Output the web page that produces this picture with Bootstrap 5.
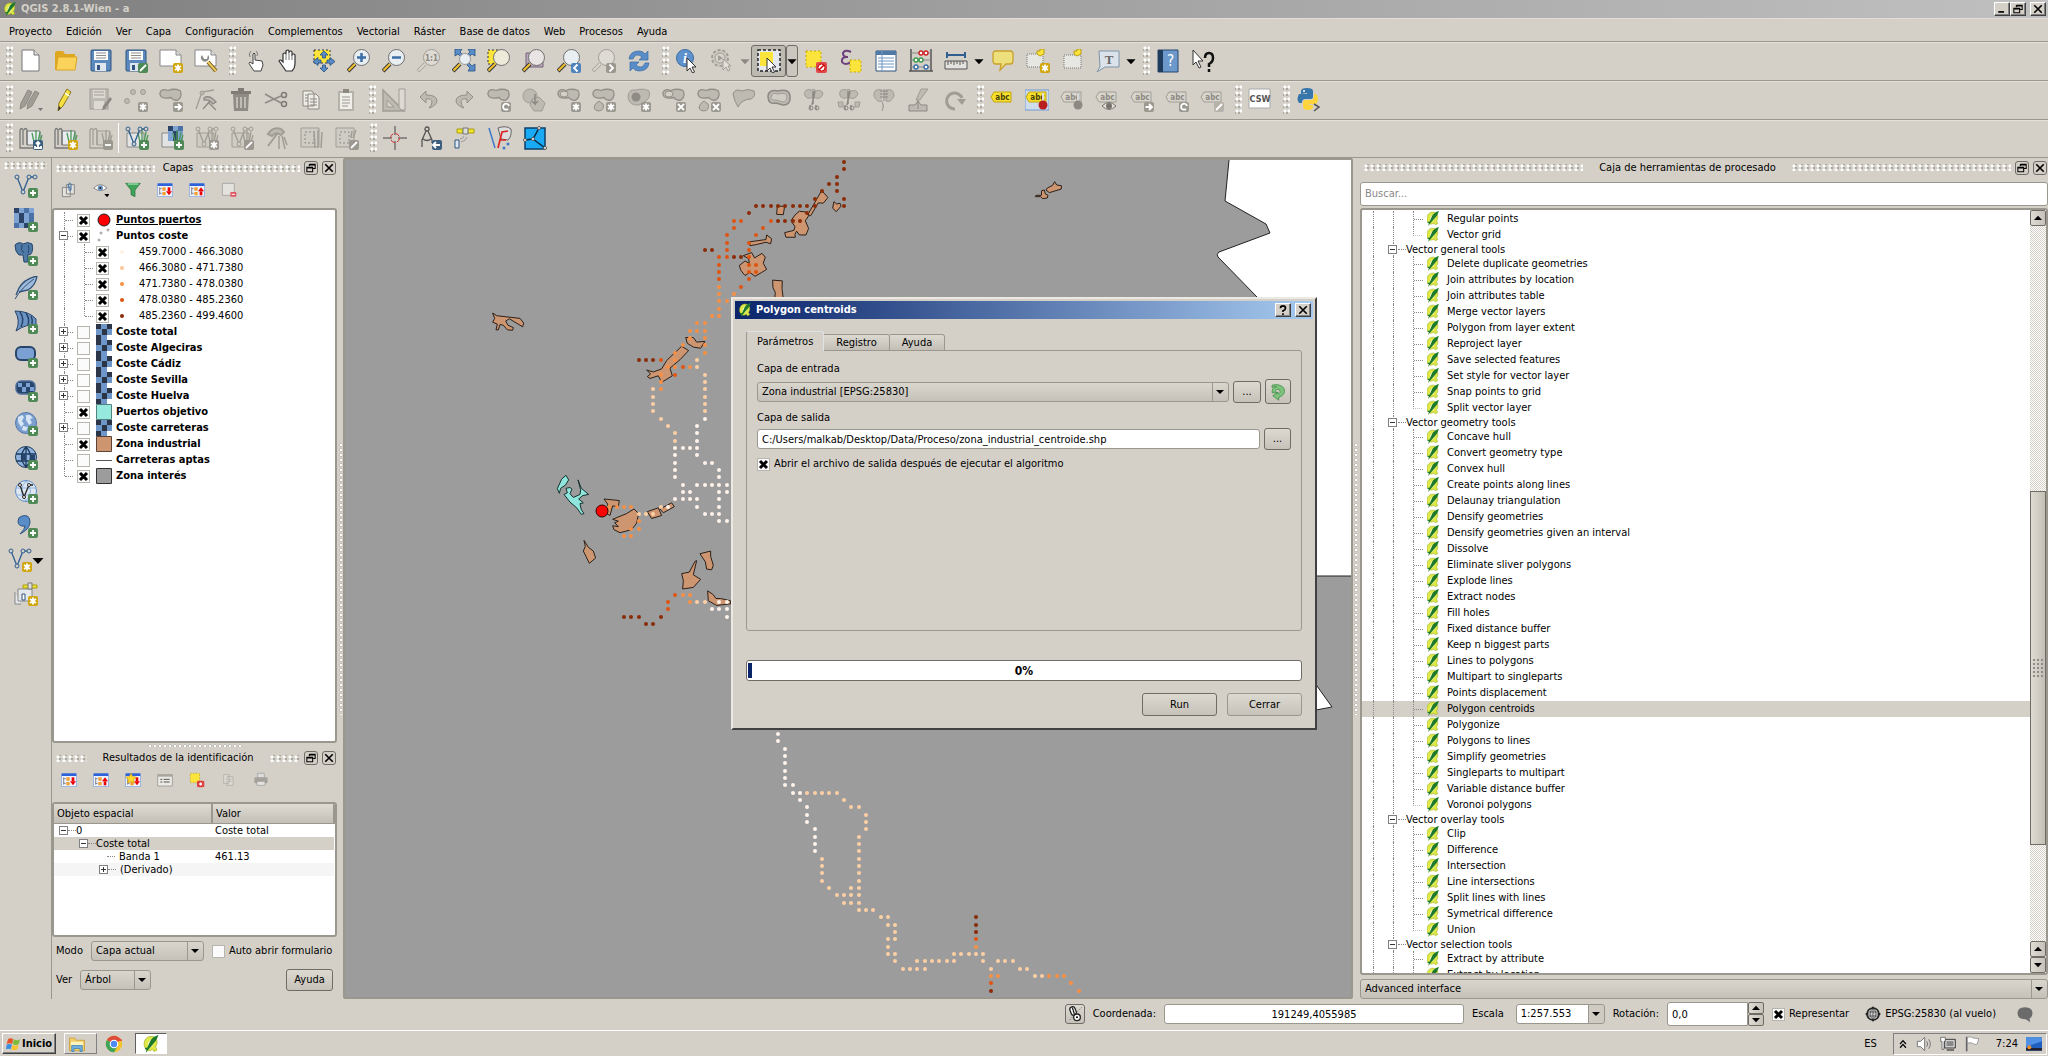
<!DOCTYPE html>
<html lang="es">
<head>
<meta charset="utf-8">
<meta name="viewport" content="width=device-width, initial-scale=1">
<title>QGIS 2.8.1-Wien - a</title>
<link href="https://cdn.jsdelivr.net/npm/bootstrap@5.3.0/dist/css/bootstrap.min.css" rel="stylesheet">
<style>
:root{--face:#d4d0c8;--edge:#9a978f;--dark:#6f6c66;--hi:#fff}
body{font-family:"DejaVu Sans Condensed","DejaVu Sans",Tahoma,sans-serif;font-size:11px;line-height:16px;color:#000;background:var(--face);overflow:hidden}
svg{display:block;flex:none}
button,select,input{font:inherit;color:inherit}
.titlebar{height:18px;background:linear-gradient(90deg,#808080,#c0c0c0);color:var(--face);font-weight:700;padding:0 2px 0 3px}
.winbtn{width:16px;height:14px;padding:0;border:1px solid;border-color:#fff #404040 #404040 #fff;box-shadow:inset -1px -1px 0 #808080;background:var(--face);display:flex;align-items:center;justify-content:center;color:#000}
.menus{height:24px;border-top:1px solid #e2ded3;border-bottom:1px solid var(--edge);padding:3px 0 0 2px}
.menus a{color:#000;text-decoration:none;padding:0 7px}
.toolrow{height:39px;border-top:1px solid #e4e1da;border-bottom:1px solid var(--edge);padding-bottom:2px}
.toolrow:last-child{height:38px}
.tool{width:35px;height:32px;padding:0;border:0;background:none;display:flex;align-items:center;justify-content:center;flex:none;position:relative}
.tool.on{border:1px solid var(--dark);border-radius:3px;background:#bdbab1}
.tool.drop{width:12px}
.tool.on+.drop{border:1px solid var(--dark);border-radius:3px;background:#cbc7be}
.grip{width:7px;height:30px;margin-left:6px;flex:none;background:radial-gradient(circle at 2px 2px,#fff 1px,transparent 2px) 0 0/4px 6px,radial-gradient(circle at 1px 1px,#aaa79f 1px,transparent 1px) 3px 3px/4px 6px}
.hgrip{height:7px;background:radial-gradient(circle at 2px 2px,#fff 1px,transparent 2px) 0 0/6px 4px,radial-gradient(circle at 1px 1px,#aaa79f 1px,transparent 1px) 3px 3px/6px 4px}
.vsep{width:1px;height:30px;background:#fff}
.sidebar{width:52px;border-right:1px solid var(--edge)}
.sidebar .tool{height:34px;width:51px}
.dock{width:285px}
.dockhead{height:20px;padding:0 1px 0 4px}
.dockbtn{width:14px;height:14px;padding:0;border:1px solid var(--dark);border-radius:3px;background:var(--face);display:flex;align-items:center;justify-content:center}
.docktools{height:26px;padding-left:1px}
.docktools .tool{width:32px;height:24px}
.well{background:#fff;border:2px solid var(--edge);border-radius:3px;overflow:hidden}
.splitv{width:5px}
.splitv.wide{width:6px}
.splitv i{width:3px;height:272px;background:radial-gradient(circle at 2px 2px,#fff 1px,#aaa79f 1px,transparent 2px) 0 0/3px 5px}
.splith{height:5px}
.splith i{width:94px;height:3px;background:radial-gradient(circle at 2px 2px,#fff 1px,#aaa79f 1px,transparent 2px) 0 0/5px 3px}
#layers{padding-top:2px}
#algs{padding-top:1px}
.lay{height:16px}
.lay .trunk{width:11px;height:16px;border-right:1px dotted #888}
.lay .trunk.sub{width:20px}
.lay .trunk.half{height:8px;align-self:flex-start}
.stub{width:8px;height:1px;border-top:1px dotted #888;flex:none}
.expd{width:9px;height:9px;border:1px solid #808080;background:#fff;flex:none;position:relative}
.expd::before{content:"";position:absolute;left:1px;right:1px;top:3px;height:1px;background:#333}
.expd.plus::after{content:"";position:absolute;top:1px;bottom:1px;left:3px;width:1px;background:#333}
.lay .expd,.fold .expd{position:absolute}
.lay .expd{left:5px;top:3px}
.form-check-input.tick{width:13px;height:13px;margin:0;border:1px solid #b8b5ae;border-radius:0;background-color:#fbfbfb;background-size:11px 11px;float:none;flex:none;min-height:0}
.form-check-input.tick:checked{background-image:url("data:image/svg+xml,%3Csvg xmlns='http://www.w3.org/2000/svg' viewBox='0 0 11 11'%3E%3Cpath d='M2 2l7 7M9 2l-7 7' stroke='%23000' stroke-width='3'/%3E%3C/svg%3E");background-position:center}
.lay .tick.root{margin:0 6px 0 4px}
.lay .tick.leaf{margin:0 0 0 3px}
.grid-res{width:100%;border-collapse:collapse;line-height:13px}
.grid-res th{height:19px;font-weight:400;padding:0 3px;background:linear-gradient(#dedbd3,#c3bfb6);border-right:2px solid var(--edge);border-bottom:1px solid var(--edge)}
.grid-res td{height:13px;padding:0 0 0 3px}
.grid-res .lv1{padding-left:2px}
.grid-res .lv2{padding-left:22px}
.grid-res .lv3{padding-left:42px}
.grid-res .lv3 .stub:first-child{margin-left:8px}
.grid-res tr.cur td{background:var(--face)}
.grid-res tr.alt td{background:#f5f5f5}
.form-select.combo{height:20px;width:auto;padding:0 20px 0 4px;font-size:11px;line-height:16px;color:#000;border:1px solid var(--edge);border-radius:3px;background:url("data:image/svg+xml,%3Csvg xmlns='http://www.w3.org/2000/svg' width='16' height='18'%3E%3Cpath d='M.5 0v18' stroke='%239a978f'/%3E%3Cpath d='M4 7h8l-4 4z'/%3E%3C/svg%3E") right center/16px 18px no-repeat,linear-gradient(#d9d6ce,#c5c1b8)}
.form-select.combo.paper{background-color:#fff;background-image:url("data:image/svg+xml,%3Csvg xmlns='http://www.w3.org/2000/svg' width='16' height='18'%3E%3Cpath d='M0 0h16v18H0z' fill='%23cfcbc2'/%3E%3Cpath d='M.5 0v18' stroke='%239a978f'/%3E%3Cpath d='M4 7h8l-4 4z'/%3E%3C/svg%3E")}
.form-control.field{height:20px;min-height:0;padding:0 4px;font-size:11px;line-height:16px;color:#000;border:1px solid var(--edge);border-radius:3px;background:#fff}
.form-control.field::placeholder{color:#888}
.pushb{height:22px;padding:0 4px;font-size:11px;line-height:16px;border:1px solid var(--dark);border-radius:3px;background:linear-gradient(#dcd9d1,#c6c2b9);color:#000;display:flex;align-items:center;justify-content:center}
.pushb.wide{width:75px;height:23px}
.pushb.soft{border-color:var(--edge)}
.mapview{border:2px solid var(--edge);border-radius:2px;background:#9c9c9c;min-width:0}
.mapview svg{width:100%;height:100%}
.toolpane{width:690px;padding-left:2px}
.alg{height:16px}
.alg.now{background:var(--face)}
.fold{height:13px;line-height:13px;position:relative}
.t1{width:12px;border-right:1px dotted #888}
.t2{width:20px;border-right:1px dotted #888}
.t3{border-left:1px dotted #888;width:10px;margin-left:19px;background:linear-gradient(90deg,#888 1px,transparent 1px) 2px 8px/2px 1px repeat-x}
.t3.end{border-left:0;padding-left:1px;background:linear-gradient(90deg,#888 1px,transparent 1px) 2px 8px/2px 1px repeat-x,linear-gradient(#888 1px,transparent 1px) 0 0/1px 2px;background-size:2px 1px,1px 2px;background-repeat:repeat-x,repeat-y;clip-path:inset(0 0 7px 0)}
.fold .expd{left:26px;top:2px}
.sbar{width:16px;background:repeating-conic-gradient(#fff 0 25%,#d4d0c8 0 50%) 0 0/2px 2px}
.sbtn{height:16px;padding:0;border:1px solid var(--dark);border-radius:2px;background:linear-gradient(90deg,#dedbd3,#c6c2b9);display:flex;align-items:center;justify-content:center;flex:none}
.thumb{border:1px solid var(--dark);background:linear-gradient(90deg,#dedbd3,#c3bfb6)}
.thumb i{width:10px;height:18px;background:radial-gradient(circle at 1px 1px,#8f8c85 1px,transparent 1px) 0 0/4px 4px}
.status{height:31px;padding:0 14px 1px 0}
.taskbar{height:26px;border-top:1px solid #fff;padding:0 1px 0 2px}
.startb{height:21px;border:1px solid;border-color:#fff #404040 #404040 #fff;box-shadow:inset -1px -1px 0 #808080;background:var(--face);font-weight:700;padding:0 3px}
.startb.flat{border-color:#fff #808080 #808080 #fff;box-shadow:none}
.startb.down{background:#fff;border-color:#606060 #fff #fff #606060;box-shadow:none}
.tray{height:22px;border:1px solid;border-color:#808080 #fff #fff #808080}
.window{position:absolute;left:731px;top:297px;width:586px;height:433px;background:var(--face);border:2px solid;border-color:#ece9e2 #404040 #404040 #ece9e2;padding:2px}
.wintitle{height:18px;background:linear-gradient(90deg,#0a246a,#a6caf0);color:#fff;font-weight:700;padding:0 2px 0 3px}
.winbody{padding:12px 11px 0}
.nav-tabs.tabs{border:0;height:20px;align-items:flex-end;margin-bottom:-1px}
.tabs .nav-link{height:17px;line-height:14px;margin:0;padding:0 12px;border:1px solid var(--edge);border-left:0;border-radius:0 3px 0 0;color:#000;background:linear-gradient(#dcd9d1,#c3bfb6)}
.tabs .nav-link.active{height:20px;line-height:17px;padding:0 10px;border-left:1px solid var(--edge);border-bottom:0;border-radius:3px 3px 0 0;background:var(--face);color:#000}
.pane{height:281px;border:1px solid var(--edge);border-radius:0 3px 3px 3px;padding:10px 10px 0}
.frow{margin-top:2px;margin-bottom:6px}
.gap10{gap:10px}
.progress.bar{height:21px;margin-top:29px;border:1px solid var(--dark);border-radius:3px;background:#fff;position:relative}
.bar .fillbit{width:4px;margin:2px 0 2px 1px;background:#0a246a}
.bar .pct{position:absolute;inset:0;display:flex;align-items:center;justify-content:center;font-weight:700}
</style>
</head>
<body>
<div class="d-flex flex-column vh-100">
  <header>
    <div class="titlebar d-flex align-items-center gap-1">
      <span data-ic="qgis" data-s="14"></span><span>QGIS 2.8.1-Wien - a</span>
      <div class="d-flex ms-auto">
        <button class="winbtn" aria-label="Minimizar" data-ic="wmin" data-s="10"></button>
        <button class="winbtn me-1" aria-label="Restaurar" data-ic="wres" data-s="10"></button>
        <button class="winbtn" aria-label="Cerrar ventana" data-ic="wx" data-s="10"></button>
      </div>
    </div>
    <nav class="menus d-flex align-items-center">
      <a href="#">Proyecto</a><a href="#">Edición</a><a href="#">Ver</a><a href="#">Capa</a><a href="#">Configuración</a><a href="#">Complementos</a><a href="#">Vectorial</a><a href="#">Ráster</a><a href="#">Base de datos</a><a href="#">Web</a><a href="#">Procesos</a><a href="#">Ayuda</a>
    </nav>
    <div class="toolrow d-flex align-items-center" data-bar="| new open save saveas composer composers | touch pan pansel zin zout z11 zfull zsel zlayer zprev znext refresh | info action darrow_g *selrect darrow desel expr table abacus measure darrow tip bookmark bookmarks annot darrow | book whats"></div>
    <div class="toolrow d-flex align-items-center" data-bar="| pencils pencil gsave gdots gmove gnode trash cut copy paste | gset gundo gredo grotate gsimple gring gpart gfill gdelring gdelpart greshape goffset gsplit gsplitp gmerge gknife grot | abc abcpin abc1 abc2 abc3 abc4 abc5 | csw | python"></div>
    <div class="toolrow d-flex align-items-center" data-bar="| gr1 gr2 gr3 ; grv grr grg1 grg2 grg3 grg4 grg5 | cross compass gps topo voro"></div>
  </header>

  <main class="d-flex flex-grow-1" style="min-height:0">
    <aside class="sidebar d-flex flex-column align-items-center">
      <div class="hgrip mt-1 align-self-stretch mx-1"></div>
      <div data-bar="vec ras ele feather mssql ora orar wms wcs wfs comma newv newgps"></div>
    </aside>

    <section class="dock d-flex flex-column">
      <div class="dockhead d-flex align-items-center"><span class="hgrip flex-fill"></span><span class="px-2">Capas</span><span class="hgrip flex-fill me-1"></span>
        <button class="dockbtn me-1" aria-label="Separar" data-ic="wres" data-s="10"></button><button class="dockbtn" aria-label="Cerrar panel" data-ic="wx" data-s="10"></button></div>
      <div class="docktools d-flex" data-bar="clip eye funnel treed treeu rem"></div>
      <div class="well mt-1 flex-grow-1" id="layers"></div>
      <div class="splith d-flex justify-content-center align-items-center"><i></i></div>
      <div class="dockhead d-flex align-items-center"><span class="hgrip flex-fill"></span><span class="px-3">Resultados de la identificación</span><span class="hgrip flex-fill me-1"></span>
        <button class="dockbtn me-1" aria-label="Separar resultados" data-ic="wres" data-s="10"></button><button class="dockbtn" aria-label="Cerrar resultados" data-ic="wx" data-s="10"></button></div>
      <div class="docktools d-flex" data-bar="treed treeu treestar form desels gcopy print"></div>
      <div class="well mt-2" style="height:135px">
        <table class="grid-res">
          <thead><tr><th style="width:158px">Objeto espacial</th><th>Valor</th></tr></thead>
          <tbody>
            <tr><td><div class="d-flex align-items-center lv1"><span class="expd"></span><span class="stub"></span>0</div></td><td>Coste total</td></tr>
            <tr class="cur"><td><div class="d-flex align-items-center lv2"><span class="expd"></span><span class="stub"></span>Coste total</div></td><td></td></tr>
            <tr><td><div class="d-flex align-items-center lv3"><span class="stub me-1"></span>Banda 1</div></td><td>461.13</td></tr>
            <tr class="alt"><td><div class="d-flex align-items-center lv3"><span class="expd plus"></span><span class="stub me-1"></span>(Derivado)</div></td><td></td></tr>
          </tbody>
        </table>
      </div>
      <div class="d-flex align-items-center px-1 mt-1">
        <label for="modo" class="me-2">Modo</label><select id="modo" class="form-select combo" style="width:113px"><option>Capa actual</option></select>
        <input type="checkbox" class="form-check-input tick ms-2 me-1" id="auto"><label for="auto">Auto abrir formulario</label>
      </div>
      <div class="d-flex align-items-center px-1 mt-2 mb-2">
        <label for="ver" class="me-2">Ver</label><select id="ver" class="form-select combo" style="width:71px"><option>Árbol</option></select>
        <button class="btn pushb ms-auto" style="width:47px">Ayuda</button>
      </div>
    </section>

    <div class="splitv wide d-flex align-items-center justify-content-center"><i></i></div>
    <section class="mapview flex-grow-1 d-flex">
      <svg role="img" aria-label="Mapa">
        <g transform="translate(-345,-160)">
          <path d="M1230 150L1225 201L1266 224L1270 233L1219 252Q1216 254 1218 257L1257 297L1300 340V576H1400V150ZM1300 660L1317 686L1332 707L1300 713Z" fill="#fff" stroke="#222"/>
          <g transform="translate(480 150) scale(.3333 .3827)">
            <g fill="#cd9570" stroke="#2b2019">
              <path vector-effect="non-scaling-stroke" d="M1025 106L1044 124L1030 139L1015 138L992 172L984 168L1008 132ZM1062 135L1070 141L1080 139L1083 147L1069 161L1058 152ZM892 147L914 147L910 169L890 168ZM945 170L958 160L978 162L986 172L976 185L986 205L978 222L958 222L950 212L945 220L946 228L918 228L914 216L942 210L945 200L933 185Z"/>
              <path vector-effect="non-scaling-stroke" d="M808 240L858 234L860 222L875 232L872 245L858 241L830 247L810 250ZM778 302L795 290L808 296L806 284L790 276L815 268L824 282L846 270L856 280L850 296L860 312L845 320L825 330L810 320L795 328L783 315ZM878 340L907 342L906 362L910 390H884L886 372L879 360Z"/>
              <path vector-effect="non-scaling-stroke" d="M38 426L50 433L120 440L131 452L128 462L105 450L88 441L77 447L84 458L100 464L98 471L82 470L70 458L60 456L55 470L48 470L52 455L38 450L44 440ZM617 490L640 490L650 502L675 500L662 518L640 515L622 505ZM605 513L626 524L600 548L570 570L577 590L545 607L535 590L510 597L502 592L512 585L500 575L520 580L545 572L560 550Z"/>
              <path vector-effect="non-scaling-stroke" d="M372 912L418 916L415 932L398 930L390 955L380 950L383 925ZM398 965L440 950L462 938L476 950L470 975L455 992L420 1000L402 992L398 982L415 984L404 974L415 970ZM502 945L535 935L545 955L515 963ZM540 938L575 922L583 932L550 948ZM312 1020L325 1038L340 1048L347 1066L328 1080L318 1062L310 1048L316 1036ZM660 1055L692 1048L692 1062L700 1085L695 1097L680 1095L676 1076ZM605 1107L628 1103L645 1075L650 1073L640 1110L662 1122L640 1143L608 1147L610 1125ZM683 1152L700 1162L708 1172L722 1172L752 1178L752 1186L710 1190L685 1178Z"/>
            </g>
            <path vector-effect="non-scaling-stroke" fill="#8ee6dc" stroke="#16302d" d="M232 885L245 860L258 850L266 862L256 876L242 884L238 897ZM252 900L262 896L258 884L270 882L276 886L270 898L280 908L300 900L302 888L294 862L304 884L326 900L308 903L296 912L310 922L300 924L304 940L312 950L304 952L290 935L270 920Z"/>
          </g>
          <g transform="translate(1020 160) scale(.3333)"><path vector-effect="non-scaling-stroke" fill="#cd9570" stroke="#2b2019" d="M82 84L98 76L104 65L110 75L124 77L124 87L88 98L78 90ZM65 92L73 90L76 102L84 106L82 114L68 116L62 110L46 110L48 106L64 106Z"/></g>
          <g id="dots"></g>
          <circle cx="602" cy="511" r="6" fill="#f00" stroke="#300"/>
        </g>
      </svg>
    </section>
    <div class="splitv d-flex align-items-center justify-content-center"><i></i></div>

    <section class="toolpane d-flex flex-column">
      <div class="dockhead d-flex align-items-center"><span class="hgrip flex-fill"></span><span class="px-3">Caja de herramientas de procesado</span><span class="hgrip flex-fill me-1"></span>
        <button class="dockbtn me-1" aria-label="Separar caja" data-ic="wres" data-s="10"></button><button class="dockbtn" aria-label="Cerrar caja" data-ic="wx" data-s="10"></button></div>
      <input class="form-control field mt-1 mb-1" style="height:24px" placeholder="Buscar..." aria-label="Buscar">
      <div class="well d-flex flex-grow-1" style="min-height:0;margin-top:-2px">
        <div id="algs" class="flex-grow-1 overflow-hidden"></div>
        <div class="sbar d-flex flex-column">
          <button class="sbtn" aria-label="Subir" data-ic="up" data-s="8"></button>
          <div style="flex:266"></div>
          <div class="thumb d-flex align-items-center justify-content-center" style="flex:353"><i></i></div>
          <div style="flex:97"></div>
          <button class="sbtn" aria-label="Subir línea" data-ic="up" data-s="8"></button>
          <button class="sbtn" aria-label="Bajar línea" data-ic="down" data-s="8"></button>
        </div>
      </div>
      <select class="form-select combo mt-1 w-100" aria-label="Interfaz"><option>Advanced interface</option></select>
    </section>
  </main>

  <footer>
    <div class="status d-flex align-items-center justify-content-end">
      <button class="btn pushb p-0 me-2" style="width:20px;height:20px" aria-label="Extensión" data-ic="mouse" data-s="16"></button>
      <label for="coord" class="me-2">Coordenada:</label><input id="coord" class="form-control field text-center me-2" style="width:300px" value="191249,4055985">
      <label for="esc" class="me-2 pe-1">Escala</label><select id="esc" class="form-select combo paper me-2" style="width:89px"><option>1:257.553</option></select>
      <label for="rot" class="me-2">Rotación:</label>
      <div class="d-flex me-2"><input id="rot" class="form-control field rounded-end-0" style="width:81px;height:24px" value="0,0">
        <div class="d-flex flex-column"><button class="sbtn" style="width:16px;height:12px" aria-label="Más" data-ic="up" data-s="8"></button><button class="sbtn" style="width:16px;height:12px" aria-label="Menos" data-ic="down" data-s="8"></button></div></div>
      <input type="checkbox" class="form-check-input tick me-1" id="rep" checked><label for="rep" class="me-3">Representar</label>
      <span class="me-1" data-ic="crs" data-s="16"></span><span class="me-3 pe-1">EPSG:25830 (al vuelo)</span>
      <span data-ic="bubble" data-s="18"></span>
    </div>
    <div class="taskbar d-flex align-items-center">
      <button class="startb d-flex align-items-center" style="width:54px"><span data-ic="win" data-s="16"></span>Inicio</button>
      <button class="startb flat ms-2 d-flex align-items-center" style="width:33px" aria-label="Explorador" data-ic="folder" data-s="18"></button>
      <button class="border-0 bg-transparent p-0 ms-2 me-2 d-flex" aria-label="Chrome" data-ic="chrome" data-s="18"></button>
      <button class="startb down ms-1 d-flex align-items-center justify-content-center" style="width:32px" aria-label="QGIS" data-ic="qgis" data-s="18"></button>
      <span class="ms-auto me-3">ES</span>
      <div class="tray d-flex align-items-center gap-2 ps-1 pe-1">
        <span data-ic="chev" data-s="10"></span><span data-ic="spk" data-s="16"></span><span data-ic="net" data-s="16"></span><span data-ic="flag" data-s="16"></span><span class="ms-2">7:24</span><span data-ic="desk" data-s="16"></span>
      </div>
    </div>
  </footer>
</div>

<div class="window" role="dialog" aria-label="Polygon centroids">
  <div class="wintitle d-flex align-items-center gap-1"><span data-ic="qgis" data-s="14"></span><span>Polygon centroids</span>
    <button class="winbtn ms-auto" aria-label="Ayuda de la ventana" data-ic="wq" data-s="10"></button><button class="winbtn" aria-label="Cerrar diálogo" data-ic="wx" data-s="10"></button></div>
  <div class="winbody">
    <div class="nav nav-tabs tabs"><button class="nav-link active">Parámetros</button><button class="nav-link">Registro</button><button class="nav-link">Ayuda</button></div>
    <div class="pane">
      <label for="ent" class="d-block">Capa de entrada</label>
      <div class="d-flex align-items-center frow gap-1">
        <select id="ent" class="form-select combo flex-grow-1"><option>Zona industrial [EPSG:25830]</option></select>
        <button class="btn pushb" style="width:28px" aria-label="Elegir entrada">...</button>
        <button class="btn pushb p-0" style="width:26px;height:25px" aria-label="Iterar" data-ic="iter" data-s="18"></button>
      </div>
      <label for="sal" class="d-block">Capa de salida</label>
      <div class="d-flex align-items-center frow gap-1">
        <input id="sal" class="form-control field flex-grow-1" value="C:/Users/malkab/Desktop/Data/Proceso/zona_industrial_centroide.shp">
        <button class="btn pushb" style="width:28px" aria-label="Elegir salida">...</button>
      </div>
      <div class="d-flex align-items-center gap-1"><input type="checkbox" class="form-check-input tick" id="abr" checked><label for="abr">Abrir el archivo de salida después de ejecutar el algoritmo</label></div>
    </div>
    <div class="progress bar" role="progressbar" aria-label="Progreso"><span class="fillbit"></span><span class="pct">0%</span></div>
    <div class="d-flex justify-content-end gap10 mt-2 pt-1">
      <button class="btn pushb wide">Run</button><button class="btn pushb wide soft">Cerrar</button>
    </div>
  </div>
</div>

<script>
/* Icon drawings on a 24 x 24 grid */
const G='#a09d95', L='#bdbab2';
const lens=(c='#e9eef2',s='#6f6f6f',h='#f0c030')=>`<path d="M8 15L1 22" stroke="#333" stroke-width="4"/><path d="M8 15L1.500 21.500" stroke="${h}" stroke-width="2.200"/><circle cx="14.500" cy="8.500" r="8" fill="${c}" stroke="${s}"/>`;
const glens=`<path d="M8 15L1 22" stroke="${G}" stroke-width="3.500"/><path d="M8 15L1.500 21.500" stroke="#dcd9d1" stroke-width="2"/><circle cx="14.500" cy="8.500" r="8" fill="#dedbd4" stroke="${G}"/>`;
const bdg=(f,d)=>`<rect x="14" y="14" width="10" height="10" rx="2" fill="${f}"/><path d="${d}" stroke="#fff" stroke-width="1.800" fill="none"/>`;
const PL='M19 16v6M16 19h6', ST='M19 15.500v7M16 17l6 4M16 21l6-4', AR='M15.500 19h6M19 16l3 3-3 3', XX='M16 16l6 6M22 16l-6 6', MI='M16 19h6', PE='M16 22l6-6', RO='M21 21a3 3 0 1 1 1-3';
const plus=bdg('#4f8a56',PL), star=bdg('#d0a60c',ST), gb=d=>bdg('#9b9890',d);
const bean=`<path d="M1 5Q2 0 9 2.500Q15 0 21 2.500Q24 8 19 12Q14 13 12 9.500Q6 11 2.500 9Q.5 7 1 5Z" fill="${L}" stroke="#928f87" stroke-width="1.300"/>`;
const sheet=(s,f)=>`<path d="M8 5h13v14H8z" fill="${f}" stroke="${s}"/><path d="M1 4v18h19v-3M1 4q1.500-3 3 0v15M5 4q1.500-3 3 0v15" fill="none" stroke="${s}" stroke-width="1.300"/>`;
const grass=c=>`<path d="M15 16l-2-9M17 16V4M19 16l2-10M21 16l2-7" stroke="${c}" stroke-width="1.300"/>`;
const vee=(c)=>`<path d="M3 3L9 18L15 3H21" fill="none" stroke="${c}" stroke-width="1.300"/><g fill="#d4d0c8" stroke="${c}"><circle cx="3" cy="3" r="2"/><circle cx="9" cy="18" r="2"/><circle cx="15" cy="3" r="2"/><circle cx="21" cy="3" r="2"/></g>`;
const tag=(f,s,t)=>`<path d="M1 9L4 4H21V14H4Z" fill="${f}" stroke="${s}"/><text x="12.500" y="12" font-size="8" font-weight="700" text-anchor="middle" fill="${t}" font-family="DejaVu Sans Condensed,sans-serif">abc</text>`;
const flo=`<rect x="2" y="1" width="20" height="21" rx="1" fill="#5b88bd" stroke="#2f5480"/><path d="M5 2h14v9H5z" fill="#fff"/><path d="M7 4h10M7 6.500h10M7 9h10" stroke="#8a8a8a"/><path d="M6 14h11v8H6z" fill="#dfe6ee"/><path d="M8 16h3v5H8z" fill="#2f5480"/>`;
const page=`<path d="M3 1H15L20 6V22H3Z" fill="#fff" stroke="#777"/><path d="M15 1v5h5" fill="#ddd" stroke="#777"/>`;
const cur=(x,y)=>`<path transform="translate(${x} ${y})" d="M0 0v13l3-3 2.500 5 2-1-2.500-5h4z" fill="#fff" stroke="#333"/>`;
const flowers=`<path d="M10 2Q1 0 3 8Q6 12 11 9Q18 13 21 6Q20 1 14 3Q12 0 10 2Z" fill="${L}" stroke="${G}"/><path d="M11 3v13M13 3l-3 14M8 17v5M14 17v5" stroke="#8c8982" stroke-width="1.500"/><circle cx="9" cy="20" r="2" fill="none" stroke="#8c8982"/><circle cx="15" cy="20" r="2" fill="none" stroke="#8c8982"/>`;
const checks=(x,y,w,n)=>{let s='';for(let i=0;i<n;i++)for(let j=0;j<n;j++)s+=`<rect x="${x+i*w}" y="${y+j*w}" width="${w}" height="${w}" fill="${['#2b4468','#7fa3d2','#4a72a6','#7fa3d2'][(i+j*3+(j>1?1:0))%4]}"/>`;return s};
const globe=(f,s)=>`<circle cx="12" cy="11" r="10.500" fill="${f}" stroke="${s}"/>`;
const panel=(a)=>`<rect x="1" y="3" width="22" height="19" fill="#eef3ff" stroke="#7fa2e0"/><path d="M1 2h22v4H1z" fill="#2e62d9"/><path d="M4 8v11M4 10h3M4 17h3" stroke="#555"/><path d="M8 8h5v5H8zM8 15h5v5H8z" fill="#f0a030"/>${a}`;
const dn='<path d="M18 8v6" stroke="#e00" stroke-width="4"/><path d="M13.500 14h9L18 20z" fill="#e00"/>', upA='<path d="M18 20v-6" stroke="#e00" stroke-width="4"/><path d="M13.500 14h9L18 8z" fill="#e00"/>';
const I={
qgis:'<path d="M13 2C6 1 2 8 3 14Q4 20 9 21Q12 21 14 19L16 22L20 20L18 16C22 10 20 2 13 2Z" fill="#dfe94a" stroke="#a3b020"/><path d="M13 6Q8 8 8 14Q8 17 10 17Q15 15 15 9Z" fill="#fff"/><path d="M22 0Q14 2 11 8L7 17L4 17V19H6L5 24L8 20L14 13L19 7Z" fill="#1c7a2a"/>',
wmin:'<path d="M3 19h14" stroke="#000" stroke-width="4"/>',
wres:'<path d="M8 3h14v10h-5M8 3v5M7 5h16" fill="none" stroke="#000" stroke-width="2.500"/><path d="M2 10h14v11H2zM2 12h14" fill="none" stroke="#000" stroke-width="2.500"/>',
wx:'<path d="M3 3l18 18M21 3L3 21" stroke="#000" stroke-width="4"/>',
wq:'<path d="M6 8Q6 2 12 2T18 8Q18 12 12 14V17M12 20v4" fill="none" stroke="#000" stroke-width="4"/>',
up:'<path d="M0 18L12 5L24 18Z"/>',down:'<path d="M0 6L12 19L24 6Z"/>',
darrow:'<path d="M1 8h22L12 20z"/>',darrow_g:'<path d="M1 8h22L12 20z" fill="#8c8982"/>',
new:page,open:'<path d="M1 4Q1 2 3 2h6l2 3h10v16H1z" fill="#e0a820"/><path d="M4 8h19l-2 13H2z" fill="#fbd35a" stroke="#d9a420"/>',
save:flo,saveas:flo+bdg('#4f8a56',PE),
composer:'<path d="M1 1H17L22 6V17H1Z" fill="#fff" stroke="#888"/><path d="M17 1v5h5" fill="#ddd" stroke="#888"/>'+star,
composers:'<path d="M1 1H17L22 6V17H1Z" fill="#fff" stroke="#888"/><path d="M17 1v5h5" fill="#ddd" stroke="#888"/><path d="M8 6a4 4 0 1 0 6 0l-1 4h-3z" fill="#8a8a8a"/><path d="M14 13L22 22" stroke="#7a5c10" stroke-width="4"/><path d="M14 13L22 22" stroke="#e8c860" stroke-width="2"/>',
touch:'<path d="M11 5v10l-3-2q-2 1 0 3l4 6h7l2-6-1-4-7-1V5q-1-2-2 0z" fill="#fff" stroke="#444"/><path d="M8 8a5 5 0 0 1 1-6M15 7a4 4 0 0 0-1-5" fill="none" stroke="#777"/>',
pan:'<path d="M6 13V5q2-2 3 0V2q2-2 3 0v1q2-2 3 0v3q2-2 3 0v9q0 4-3 7H9L2 12q1-2 3 0z" fill="#fff" stroke="#333" stroke-width="1.200"/><path d="M9 5v6M12 3v8M15 5v6" stroke="#777"/>',
pansel:'<path d="M2 1h16v13H2z" fill="#fbe43b" stroke="#333" stroke-dasharray="2"/><g fill="#5a8cc8" stroke="#27507f" stroke-width=".8"><path d="M12 2l4 4h-2.500v3h-3V6H8zM12 23l4-4h-2.500v-3h-3v3H8zM1 12.500l5-4v2.500h3v3H6v2.500zM23 12.500l-5-4v2.500h-3v3h3v2.500z"/></g>',
zin:lens()+'<path d="M14.500 4v9M10 8.500h9" stroke="#3a6ea5" stroke-width="2.500"/>',
zout:lens()+'<path d="M10 8.500h9" stroke="#3a6ea5" stroke-width="2.500"/>',
z11:glens+'<text x="14.500" y="11.500" font-size="8" text-anchor="middle" fill="#8a8780" font-weight="700">1:1</text>',
zfull:'<path d="M3 0h7L8 3l3 3-2 2-3-3-3 2zM23 0v7l-3-2-3 3-2-2 3-3-2-3zM23 22h-7l2-3-3-3 2-2 3 3 3-2z" fill="#5a8cc8" stroke="#27507f" stroke-width=".8"/><path d="M8 15L1 22" stroke="#333" stroke-width="4"/><path d="M8 15L1.500 21.500" stroke="#f0c030" stroke-width="2.200"/><circle cx="13" cy="10" r="5.500" fill="#e9eef2" stroke="#999"/>',
zsel:'<path d="M1 1h14v14H1z" fill="#fbe43b" stroke="#333" stroke-dasharray="2"/>'+lens('#eeeada'),
zlayer:'<path d="M4 4h17v14H4z" fill="#b9a8b9" stroke="#76627a"/>'+lens('#e8e4e4'),
zprev:lens()+bdg('#4f83bd','M20.500 15.500L17 19l3.500 3.500'),znext:glens+gb('M17.500 15.500L21 19l-3.500 3.500'),
refresh:'<path d="M2 10Q3 2 12 2q4 0 6 3l3-3v9h-9l3-3q-6-5-9 2zM22 14q-1 8-10 8-4 0-6-3l-3 3v-9h9l-3 3q6 5 9-2z" fill="#5a8cc8" stroke="#3a6ea5" stroke-width=".7"/>',
info:'<circle cx="10" cy="9" r="8.500" fill="#5f92cc" stroke="#3a6ea5"/><text x="10" y="14" font-size="14" font-style="italic" font-weight="700" fill="#fff" text-anchor="middle" font-family="Liberation Serif,serif">i</text>'+cur(12,9),
action:`<circle cx="10" cy="9" r="8" fill="#cbc8c0" stroke="${G}" stroke-width="2" stroke-dasharray="3 2"/><circle cx="10" cy="9" r="5" fill="#d8d5cd" stroke="${G}"/><path d="M8 6v6l5-3z" fill="${G}"/><path d="M13 10v11l3-3 2 4 2-1-2-4h3z" fill="#e4e1da" stroke="${G}"/>`,
selrect:'<path d="M1 1h22v21H1z" fill="#e5e8ee" stroke="#222" stroke-width="1.500" stroke-dasharray="3 2"/><path d="M3 3h13v14H3z" fill="#fbe43b"/>'+cur(10,9),
desel:'<path d="M2 2h15v16H2z" fill="#fbe43b" stroke="#c8a800" stroke-dasharray="2"/><rect x="12" y="13" width="11" height="11" rx="2" fill="#e04848"/><circle cx="17.500" cy="18.500" r="3.500" fill="#fff" stroke="#c00"/><path d="M15 21l5-5" stroke="#c00" stroke-width="1.500"/>',
expr:'<path d="M12 3Q6 0 4 4Q4 8 8 8Q2 8 3 13Q6 17 12 13M6 8h3" stroke="#6b3f7d" stroke-width="2" fill="none"/><path d="M11 11h11v12H11z" fill="#fbe43b" stroke="#c8a800" stroke-dasharray="2"/>',
table:'<path d="M2 2h20v20H2z" fill="#fff" stroke="#2f5480"/><path d="M2 2h20v4H2z" fill="#4f7aa8"/><path d="M8 2v20M4 9h16M4 12h16M4 15h16M4 18h16" stroke="#6f96c4"/>',
abacus:'<path d="M2 0v22M22 0v22M0 22h24" stroke="#555" stroke-width="1.500"/><path d="M2 4h20M2 11h20M2 18h20" stroke="#888"/><g fill="#fff" stroke-width="1.400"><g stroke="#c22"><circle cx="12" cy="4" r="2"/><circle cx="17" cy="4" r="2"/></g><g stroke="#3a9a4a"><circle cx="7" cy="11" r="2"/><circle cx="12" cy="11" r="2"/></g><g stroke="#3a6ea5"><circle cx="7" cy="18" r="2"/><circle cx="17" cy="18" r="2"/></g></g>',
measure:'<path d="M3 6h18M3 3v6M21 3v6" stroke="#2f5f8f" stroke-width="2"/><path d="M1 12h22v8H1z" fill="#e4e2dd" stroke="#555"/><path d="M4 12v4M7 12v3M10 12v4M13 12v3M16 12v4M19 12v3" stroke="#555"/>',
tip:'<path d="M5 2h14q3 0 3 3v7q0 3-3 3h-4l-6 6 1-6H5q-3 0-3-3V5q0-3 3-3z" fill="#eddf7c" stroke="#c8a02a" stroke-width="1.300"/>',
bookmark:'<path d="M1 5h16v13H1z" fill="#e6e6e2" stroke="#777" stroke-dasharray="1"/><path d="M11 5V2h3V0h4v5l-4 2z" fill="#fbe43b" stroke="#b89a10"/>'+star,
bookmarks:'<path d="M3 6h17v13H3z" fill="#e6e6e2" stroke="#777" stroke-dasharray="1"/><path d="M13 5V2h3V0h4v5l-4 2z" fill="#fbe43b" stroke="#b89a10"/>',
annot:'<path d="M3 2h20v16H9l-8 5 3-5z" fill="#dbe2ea" stroke="#7f94aa"/><text x="13" y="15" font-size="13" font-weight="700" text-anchor="middle" fill="#666" font-family="Liberation Serif,serif">T</text>',
book:'<path d="M2 1h20v22H2z" fill="#6c98cc" stroke="#26466c"/><path d="M2 1h5v22H2z" fill="#1f3c5c"/><text x="14.500" y="17" font-size="15" text-anchor="middle" fill="#fff">?</text>',
whats:'<path d="M2 1v15l3-3 3 6 2-1-3-6h5z" fill="#fff" stroke="#333"/><path d="M14 9q0-5 4-5t4 5q0 4-4 6v3M18 20v3" fill="none" stroke="#111" stroke-width="2.500"/>',
pencils:`<path d="M1 21l1-6L9 2l4 2L6 18zM8 21l1-6 7-12 4 2-7 13z" fill="${G}" stroke="#8c8982"/><path d="M19 20h5l-2.500 3z" fill="#777"/>`,
pencil:'<path d="M4 23l1-8L13 1l4 3L9 18z" fill="#f5e040" stroke="#8a7420"/><path d="M11 5l4 3" stroke="#fff" stroke-width="1.500"/><path d="M4 23l1-5 2 2z" fill="#333"/>',
gsave:`<rect x="1" y="1" width="18" height="20" fill="${L}" stroke="${G}"/><path d="M4 2h12v8H4z" fill="#dddad3"/><path d="M5 4h10M5 7h10" stroke="${G}"/><path d="M5 13h10v8H5z" fill="#dddad3"/><path d="M13 22l1-4 7-9 2 2-7 10z" fill="#8c8982"/>`,
gdots:`<g fill="${L}" stroke="${G}"><circle cx="9" cy="4" r="2.500"/><circle cx="19" cy="4" r="2.500"/><circle cx="3" cy="13" r="2.500"/></g>`+gb(ST),
gmove:bean+gb(AR),
gnode:`<path d="M2 21L8 4L20 2" fill="none" stroke="${G}" stroke-width="1.300"/><circle cx="8" cy="5" r="2" fill="${L}" stroke="${G}"/><path d="M9 21l7-8M10 10q4-3 9 1l3 3-3 2q-4-5-9-4zM15 15l7 7" stroke="#8c8982" fill="${L}" stroke-width="1.300"/>`,
trash:'<path d="M4 6h16l-1 17H5z" fill="#8f8c85"/><path d="M2 3h20v3H2zM9 0h6v3H9z" fill="#7f7c76"/><path d="M8 9v11M12 9v11M16 9v11" stroke="#cfccc4" stroke-width="1.500"/>',
cut:'<path d="M1 6L17 15M1 15L17 8" stroke="#8f8c85" stroke-width="1.500"/><circle cx="20" cy="7" r="2.500" fill="none" stroke="#7f7c76" stroke-width="1.500"/><circle cx="20" cy="16" r="2.500" fill="none" stroke="#7f7c76" stroke-width="1.500"/>',
copy:'<path d="M4 3h9l2 3v12H4zM9 6h8l3 3v12H9z" fill="#eeece6" stroke="#8c8982"/><path d="M11 11h7M11 14h7M11 17h7M6 7h3M6 10h3M6 13h3" stroke="#8c8982"/>',
paste:'<path d="M4 3h16v20H4z" fill="#b5b2a9"/><path d="M6 5h12v16H6z" fill="#f0eee8"/><path d="M9 1h6v4H9z" fill="#8c8982"/><path d="M8 9h8M8 12h8M8 15h8M8 18h6" stroke="#9a978f"/>',
gset:`<path d="M1 2v21h21z" fill="${L}" stroke="${G}" stroke-width="1.500"/><path d="M5 12v7h7z" fill="#d4d0c8" stroke="${G}"/><path d="M17 1h6v21h-4l-2-3z" fill="#dddad3" stroke="${G}"/>`,
gundo:`<path d="M9 3L3 9l6 6v-4q6-1 6 3 0 3-3 6 7-2 8-7 0-6-11-6z" fill="${L}" stroke="#928f87"/>`,
gredo:`<path d="M15 3l6 6-6 6v-4q-6-1-6 3 0 3 3 6-7-2-8-7 0-6 11-6z" fill="${L}" stroke="#928f87"/>`,
grotate:bean+gb(RO),gsimple:`<circle cx="8" cy="8" r="7" fill="${L}" stroke="${G}"/><path d="M10 11l7-2 6 6-3 8h-8l-4-6z" fill="${L}" stroke="${G}"/><path d="M13 6v10l-3-3M13 16l3-3" stroke="#8c8982" fill="none" stroke-width="1.500"/>`,
gring:bean+`<ellipse cx="7" cy="6" rx="4" ry="3" fill="#d4d0c8" stroke="#928f87"/>`+gb(ST),
gpart:bean+`<path d="M2 20q0-4 5-7l4 3q2 6-4 7-4 0-5-3z" fill="${L}" stroke="#928f87"/>`+gb(ST),
gfill:`<path d="M1 9Q1 1 9 2Q17 0 22 3Q24 9 19 13L12 17Q2 18 1 9Z" fill="${L}" stroke="${G}"/><circle cx="9" cy="9" r="4.500" fill="#8f8c85"/>`+gb(ST),
gdelring:bean+`<ellipse cx="7" cy="6" rx="4" ry="3" fill="#d4d0c8" stroke="#928f87"/>`+gb(XX),
gdelpart:bean+`<path d="M2 20q0-4 5-7l4 3q2 6-4 7-4 0-5-3z" fill="${L}" stroke="#928f87"/>`+gb(XX),
greshape:`<path d="M1 6Q3 0 10 3Q16 0 22 3Q24 8 19 11Q10 11 6 19L3 13Z" fill="${L}" stroke="#928f87"/>`,
goffset:`<path d="M1 8Q2 1 11 3Q22 0 23 8Q24 17 16 17L9 15Q1 17 1 8Z" fill="${L}" stroke="#8c8982" stroke-width="1.500"/><path d="M4 9Q5 4 11 6Q19 4 20 8Q20 14 16 14L9 12Q4 13 4 9Z" fill="#cfccc4" stroke="${G}"/>`,
gsplit:flowers,gsplitp:flowers+`<path d="M1 14h5v5H2zM18 14h5l-1 5h-4z" fill="${L}" stroke="${G}"/>`,
gmerge:`<path d="M10 2Q1 0 2 8Q5 15 10 13Q13 18 10 23M14 2Q22 0 22 8Q19 15 14 13Z" fill="${L}" stroke="${G}"/><path d="M8 3h8M8 6h8M8 9h8M12 1v12" stroke="#8c8982"/>`,
gknife:`<path d="M9 12L14 1h7L13 12z" fill="${L}" stroke="${G}"/><path d="M2 17h6l3-4 3 4h6v6H2z" fill="${L}" stroke="#8c8982"/><path d="M11 12v9" stroke="#8c8982"/>`,
grot:`<path d="M13 21A8 8 0 1 1 20 10" fill="none" stroke="${G}" stroke-width="3"/><path d="M15 11h9l-4 6z" fill="${G}"/>`,
abc:tag('#f6e02c','#c2a412','#4a4208'),
abcpin:'<rect x="0" y="2" width="24" height="20" fill="#cfdcec" stroke="#6c9ad4"/>'+tag('#f6e02c','#c2a412','#4a4208')+'<path d="M17 5h2v8h-2z" fill="#ddd"/><circle cx="18" cy="17" r="4.500" fill="#b82020"/>',
abc1:tag('#d8d5cd',G,'#8c8982')+'<path d="M17 5h2v8h-2z" fill="#eee" stroke="#999" stroke-width=".5"/><circle cx="18" cy="17" r="4.500" fill="#8c8982"/>',
abc2:tag('#d8d5cd',G,'#8c8982')+'<path d="M7 18q7-7 14 0q-7 7-14 0z" fill="#e4e1da" stroke="#77746d"/><circle cx="14" cy="18" r="3" fill="#77746d"/>',
abc3:tag('#d8d5cd',G,'#8c8982')+gb(AR),abc4:tag('#d8d5cd',G,'#8c8982')+gb(RO),abc5:tag('#d8d5cd',G,'#8c8982')+bdg('#b5b2a9',PE),
csw:'<path d="M1 1h21v19H1z" fill="#fff" stroke="#aaa"/><text x="12" y="14" font-size="9" font-weight="700" text-anchor="middle" fill="#555" font-family="DejaVu Sans Condensed,sans-serif">CSW</text>',
python:'<path d="M5 6V3q0-3 6-3t6 3v6q0 2-2 2H9q-3 0-3 4H3q-3-4 0-9h8V5z" fill="#3776ab"/><circle cx="8" cy="3" r="1" fill="#fff"/><path d="M18 6h2q4 5 0 10h-7v1h4v2q0 3-5 3t-5-3v-4q0-3 3-3h5q3 0 3-4z" fill="#ffd43b"/><path d="M18 16l5 3-5 4" fill="none" stroke="#555" stroke-width="1.500"/>',
gr1:sheet('#777','#e8ecf0')+grass('#4c9a5a')+bdg('#3c5f7f','M19 21v-5M17 18l2-2 2 2M16 20v2h6v-2'),gr2:sheet('#777','#e8ecf0')+grass('#4c9a5a')+star,gr3:sheet(G,'#d0cdc5')+grass(G)+gb(MI),
grv:'<path d="M2 7h17v14H2z" fill="#e2e4e4" stroke="#888"/>'+grass('#4c9a5a')+vee('#2f5f8f')+plus,
grr:'<path d="M2 7h17v14H2z" fill="#e2e4e4" stroke="#888"/>'+checks(8,0,5,3)+grass('#4c9a5a')+plus,
grg1:`<path d="M2 7h17v14H2z" fill="#cfccc4" stroke="${G}"/>`+grass(G)+vee(G)+gb(ST),grg2:`<path d="M2 7h17v14H2z" fill="#cfccc4" stroke="${G}"/>`+grass(G)+vee(G)+gb(PE),
grg3:`<path d="M3 8q5-8 13-5l3 3-3 3q-5-4-9 1zM12 8L3 20" stroke="${G}" stroke-width="2" fill="${L}"/><path d="M14 10v13M17 10l3 13M19 11l3 8" stroke="${G}" stroke-width="1.500"/>`,
grg4:`<path d="M1 2h18v19H1z" fill="#cfccc4" stroke="${G}"/><path d="M5 6h9v11H5z" fill="none" stroke="#8c8982" stroke-dasharray="2"/><path d="M15 22L14 5M18 22V4M21 22l1-16" stroke="${G}" stroke-width="1.500"/>`,
grg5:`<path d="M1 2h18v19H1z" fill="#cfccc4" stroke="${G}"/><path d="M5 6h9v11H5z" fill="none" stroke="#8c8982" stroke-dasharray="2"/><path d="M16 12l1-7M18 12l3-8" stroke="${G}" stroke-width="1.500"/>`+gb(PE),
cross:'<path d="M12 0v9M12 15v9M0 12h9M15 12h9" stroke="#444"/><circle cx="12" cy="12" r="4.500" fill="none" stroke="#c33" stroke-dasharray="5 2"/>',
compass:'<circle cx="9" cy="3" r="2" fill="none" stroke="#555" stroke-width="1.300"/><path d="M8 5L4 14V21M10 5l4 9v3M5 13q4 3 8 0" stroke="#555" stroke-width="1.300" fill="none"/>'+bdg('#3c5f7f','M22 19h-6M18 16l-3 3 3 3'),
gps:'<path d="M4 3h6v4H4zM15 3h6v4h-6z" fill="#f2e62a" stroke="#a89c10"/><path d="M10 2h5v6h-5z" fill="#ddd" stroke="#777"/><path d="M2 14h4v8H2z" fill="#dfe8f0" stroke="#2f5480"/><path d="M7 13q3 0 4-3M8 16q5-1 6-5" fill="none" stroke="#999"/>',
topo:'<path d="M10 2q8-3 13 1 1 7-3 11l-7-1z" fill="#ddd" stroke="#666"/><path d="M1 2l6 20" fill="none" stroke="#3f78c8" stroke-width="1.500"/><path d="M10 22L14 6l6-1M12 14h6" stroke="#d22" stroke-width="1.700" fill="none"/><circle cx="20" cy="18" r="1.500" fill="#3f78c8"/><circle cx="16" cy="22" r="1.500" fill="#3f78c8"/>',
voro:'<path d="M2 2h20v21H2z" fill="#19a9f5" stroke="#0b3f66" stroke-width="1.500"/><path d="M2 14l8-1 6-11M10 13l12 9" stroke="#06283f" fill="none" stroke-width="1.500"/><g fill="#fff" stroke="#555"><circle cx="2" cy="14" r="1.500"/><circle cx="10" cy="13" r="1.500"/><circle cx="16" cy="2" r="1.500"/><circle cx="22" cy="22" r="1.500"/></g>',
vec:vee('#2f5f8f')+plus,ras:checks(0,0,5,4)+plus,
ele:'<path d="M1 3q4-4 8-1 5-3 9 0 2 7-2 11l-2-1v8h-4l-1-7-4 0Q1 10 1 3z" fill="#4f7aa8" stroke="#27446a"/><path d="M8 3q-2 5 2 8M14 3q2 4 0 8" fill="none" stroke="#27446a"/>'+plus,
feather:'<path d="M2 19L5 12Q10 3 23 0Q22 9 14 14L5 16" fill="#9fbbdc" stroke="#2f4f75" stroke-width="1.300"/><path d="M1 23Q8 11 20 3" fill="none" stroke="#2f4f75"/>'+plus,
mssql:'<path d="M1 1q14 0 21 8v7q-9-3-20 5 5-10-1-20z" fill="#6c94c4" stroke="#27446a"/><path d="M6 2q5 7 1 15M12 3q4 6 2 12M17 6q2 4 1 8" fill="none" stroke="#27446a" stroke-width="1.500"/>'+plus,
ora:'<rect x="2" y="3" width="19" height="13" rx="5" fill="#7ba0d4" stroke="#27446a" stroke-width="2"/>'+plus,
orar:'<rect x="2" y="3" width="19" height="13" rx="5" fill="#27446a" stroke="#4f6f9c" stroke-width="1.500"/><path d="M4 5h4v4H4zM12 5h4v4h-4zM8 9h4v5H8zM16 9h4v4h-4z" fill="#7ba0d4"/>'+plus,
wms:globe('#7ba0d0','#5578a8')+'<path d="M4 5l4-2 2 2-2 4 2 3-3 3-3-5zM12 3l4 0 3 3-3 1 2 4-3 2-3-5zM9 14l5 1-2 4-4-1z" fill="#d6e4f4"/>'+plus,
wcs:globe('#8fb2de','#1f3c5c')+'<path d="M2 8h20M2 15h20M12 1v20M12 1q-9 10 0 20M12 1q9 10 0 20" fill="none" stroke="#1f3c5c" stroke-width="1.300"/><path d="M8 8h4v6H8zM16 9h5v5h-4z" fill="#27446a"/>'+plus,
wfs:globe('#dfe8f2','#5a8cc8')+'<path d="M2 8h20M2 15h20M12 1q-9 10 0 20M12 1q9 10 0 20" fill="none" stroke="#8fb2de"/><path d="M6 5l4 12 5-12h4" fill="none" stroke="#222" stroke-width="1.300"/><g fill="#fff" stroke="#222"><circle cx="6" cy="5" r="1.500"/><circle cx="10" cy="17" r="1.500"/><circle cx="15" cy="5" r="1.500"/></g>'+plus,
comma:'<path d="M8 2q8-2 8 6 0 7-10 12 5-5 5-8-7 1-7-5 0-4 4-5z" fill="#5a8cc8" stroke="#2f5480"/>'+plus,
newv:vee('#2f5f8f')+star,
newgps:'<path d="M1 10v12h6M4 7v12h14V7z" fill="#e6e9ec" stroke="#888"/><path d="M8 12h3v6H8z" fill="#fff" stroke="#2f5480"/><path d="M9 3h6v3H9zM17 3h6v3h-6z" fill="#f2e62a" stroke="#a89c10"/><path d="M14 1h4v6h-4z" fill="#ddd" stroke="#777"/>'+star,
clip:'<path d="M2 8h12v14H2zM8 4h12v14H8z" fill="#e4e2dd" stroke="#888" stroke-width="1.500"/><path d="M11 8V3q2-3 4 0v9q-2 2-3 0V6" fill="none" stroke="#3a6ea5" stroke-width="1.500"/>',
eye:'<path d="M1 9q10-10 20 0-10 8-20 0z" fill="#fff" stroke="#888" stroke-width="1.500"/><circle cx="11" cy="9" r="4" fill="#6f96c4"/><circle cx="11" cy="9" r="1.500" fill="#222"/><path d="M17 18h8l-4 5z"/>',
funnel:'<path d="M1 2h22l-8 10v10l-6-3v-7z" fill="#3fa45a" stroke="#1f6a34"/><path d="M4 3h16" stroke="#9fe0b0" stroke-width="2"/>',
treed:panel(dn),treeu:panel(upA),treestar:panel(dn)+'<path d="M9 2l2.500 5 5.500.500-4 4 1 5.500-5-3-5 3 1-5.500-4-4 5.500-.500z" fill="#ffd92a" stroke="#c89a10"/>',
rem:'<path d="M2 2h18v18H2z" fill="#e4e2dd" stroke="#aaa" stroke-width="1.500"/><rect x="14" y="15" width="9" height="7" rx="1.500" fill="#e05560"/><path d="M16 18.500h5" stroke="#fff" stroke-width="1.500"/>',
form:'<path d="M1 4h22v17H1z" fill="#eceae4" stroke="#8c8982"/><path d="M1 4h22v3H1z" fill="#a8a59d"/><path d="M5 11h3M10 11h9M5 15h3M10 15h9" stroke="#555" stroke-width="1.500"/>',
desels:'<path d="M2 2h14v14H2z" fill="#fbe43b" stroke="#b89a10" stroke-dasharray="2"/><rect x="12" y="13" width="11" height="10" rx="2" fill="#e04848"/><circle cx="17.500" cy="18" r="3" fill="#fff" stroke="#c00"/>',
gcopy:`<path d="M4 4h8v13H4zM9 7h9v13H9z" fill="#dddad3" stroke="#aaa79f"/><path d="M11 11h5M11 14h5" stroke="#aaa79f"/>`,
print:'<path d="M7 2h10v7H7z" fill="#ddd" stroke="#999"/><rect x="2" y="8" width="20" height="9" rx="2" fill="#a5a29b"/><path d="M6 14h12v6H6z" fill="#e4e2dd" stroke="#999"/>',
iter:'<path d="M4 3Q14 0 20 7Q23 16 13 19V23L5 17L12 12V15Q17 13 14 9Q10 7 8 11L11 13L4 13Q4 5 10 5Q7 4 4 6Z" fill="#7cc47c" stroke="#3f8a45"/>',
mouse:'<rect x="5" y="1" width="8" height="13" rx="4" fill="#fff" stroke="#222" stroke-width="2" transform="rotate(-20 9 7)"/><path d="M8 2l3 10" stroke="#222" stroke-width="2"/><circle cx="15" cy="17" r="5" fill="#fff" stroke="#222" stroke-width="2"/><circle cx="15" cy="17" r="1.500"/><path d="M22 2L3 22" stroke="#444" stroke-dasharray="2"/>',
crs:'<circle cx="12" cy="12" r="9" fill="#ccc" stroke="#222" stroke-width="2.500"/><path d="M12 1v4M12 19v4M1 12h4M19 12h4" stroke="#222" stroke-width="3"/><path d="M4 9h16M4 15h16M12 3v18M12 3q-9 9 0 18M12 3q9 9 0 18" fill="none" stroke="#333"/>',
bubble:'<path d="M12 3q10 0 10 8 0 5-4 7l1 5-6-4Q2 19 2 11q0-8 10-8z" fill="#6b6b6b"/>',
win:'<path d="M3 5q4-3 8 0l-2 7q-4-2-8 0z" fill="#e8542a"/><path d="M12 5q4 3 9 0l-2 7q-4 3-9 0z" fill="#7cbb3a"/><path d="M1 13q4-2 8 0l-2 7q-4-2-7 0z" fill="#3a8ee0"/><path d="M10 13q4 3 9 0l-2 7q-5 3-9 0z" fill="#f7c22c"/>',
folder:'<path d="M2 4h7l2 3h11v14H2z" fill="#f0cf6a" stroke="#c79a30"/><path d="M4 9h16v5H4z" fill="#fff3c0"/><path d="M5 14h14v8h-3v-4H8v4H5z" fill="#6fb0e0" stroke="#3f80b8"/>',
chrome:'<circle cx="12" cy="12" r="11" fill="#f2c32c"/><path d="M12 12L2.500 6.500A11 11 0 0 1 21.500 6.500z" fill="#dd4b39"/><path d="M12 12L2.500 6.500A11 11 0 0 0 12 23l5-9z" fill="#3fa45a"/><path d="M12 7h10.500" stroke="#dd4b39" stroke-width="2"/><circle cx="12" cy="12" r="5" fill="#4a8af4" stroke="#fff" stroke-width="1.500"/>',
chev:'<path d="M5 12l7-8 7 8M5 21l7-8 7 8" fill="none" stroke="#000" stroke-width="3"/>',
spk:'<path d="M2 8h5l6-6v20l-6-6H2z" fill="#fff" stroke="#666" stroke-width="1.300"/><path d="M16 8q3 4 0 8M19 5q5 7 0 14" fill="none" stroke="#777" stroke-width="1.500"/>',
net:'<path d="M7 5h16v13H7z" fill="#aaa" stroke="#444" stroke-width="1.500"/><path d="M9 7h12v9H9z" fill="#888" stroke="#fff"/><path d="M10 21h11" stroke="#444" stroke-width="2"/><path d="M1 2h7v6H6v12H3V8H1z" fill="#fff" stroke="#444"/>',
flag:'<path d="M4 1v22" stroke="#666" stroke-width="2.500"/><path d="M5 2q5-2 9 1l8 1-2 8q-4 2-7-1-4-2-8 0z" fill="#fff" stroke="#777"/>',
desk:'<path d="M0 2h24v20H0z" fill="#1f5fc0"/><path d="M0 2h24v6L0 16z" fill="#4f90e4"/><path d="M0 18h24v4H0z" fill="#223"/><circle cx="5" cy="17" r="3" fill="#f0902a"/>'
};
const svg=(n,s)=>`<svg width="${s}" height="${s}" viewBox="0 0 24 24" fill="#000" aria-hidden="true">${I[n]||''}</svg>`;
document.querySelectorAll('[data-ic]').forEach(e=>e.innerHTML=svg(e.dataset.ic,+e.dataset.s));
document.querySelectorAll('[data-bar]').forEach(b=>{
  const small=b.classList.contains('docktools');
  b.innerHTML=b.dataset.bar.split(' ').map(t=>{
    if(t==='|')return '<span class="grip"></span>';
    if(t===';')return '<span class="vsep"></span>';
    const on=t[0]==='*'; if(on)t=t.slice(1);
    const d=t.startsWith('darrow');
    return `<button class="tool${on?' on':''}${d?' drop':''}" aria-label="${t}">${svg(t,d?10:small?16:24)}${t==='newv'?svg('darrow',12):''}</button>`;
  }).join('');
});

/* Layer tree */
const sw={
 red:'<circle cx="8" cy="8" r="6" fill="#f00" stroke="#222"/>',
 pts:'<g fill="#eee" stroke="#999"><circle cx="3" cy="12" r="1"/><circle cx="5" cy="5" r="1"/><circle cx="12" cy="2" r="1"/></g>',
 ras:'<path d="M0 0h16v16H0z" fill="#6f96c9"/><path d="M0 0h5v5H0zM11 0h5v5h-5zM6 5h5v6H6zM0 11h5v5H0z" fill="#2b3548"/><path d="M11 11h5v5h-5z" fill="#fff"/>',
 teal:'<path d="M.5.5h15v15H.5z" fill="#95e9dd" stroke="#57817b"/>',brown:'<path d="M.5.5h15v15H.5z" fill="#cd9570" stroke="#5d4434"/>',
 grey:'<path d="M.5.5h15v15H.5z" fill="#9c9c9c" stroke="#333"/>',line:'<path d="M0 8.5h16" stroke="#555"/>'};
const lay=[['Puntos puertos',1,'red','','u'],['Puntos coste',1,'pts','m'],
['459.7000 - 466.3080','#fff0e4'],['466.3080 - 471.7380','#fdc79a'],['471.7380 - 478.0380','#f98f45'],['478.0380 - 485.2360','#df5410'],['485.2360 - 499.4600','#8b2c08'],
['Coste total',0,'ras','p'],['Coste Algeciras',0,'ras','p'],['Coste Cádiz',0,'ras','p'],['Coste Sevilla',0,'ras','p'],['Coste Huelva',0,'ras','p'],
['Puertos objetivo',1,'teal',''],['Coste carreteras',0,'ras','p'],['Zona industrial',1,'brown',''],['Carreteras aptas',0,'line',''],['Zona interés',1,'grey','']];
document.getElementById('layers').innerHTML=lay.map((r,i)=>{
  if(r.length===2)return `<div class="lay d-flex align-items-center"><span class="trunk"></span><span class="trunk sub${i===6?' half':''}"></span><span class="stub"></span><input type="checkbox" class="form-check-input tick leaf" id="l${i}" checked><svg class="ms-2" width="10" height="10"><circle cx="5" cy="5" r="2" fill="${r[1]}"/></svg><label class="ms-2 ps-1" for="l${i}">${r[0]}</label></div>`;
  return `<div class="lay d-flex align-items-center position-relative"><span class="trunk${i===16?' half':''}"></span>${r[3]?`<span class="expd${r[3]==='p'?' plus':''}"></span>`:''}<span class="stub"></span><input type="checkbox" class="form-check-input tick root" id="l${i}" ${r[1]?'checked':''}><svg width="16" height="16">${sw[r[2]]}</svg><label class="fw-bold ms-1${r[4]?' text-decoration-underline':''}" for="l${i}">${r[0]}</label></div>`;
}).join('');

/* Processing algorithms; entries that begin with # open a group */
const algs='Regular points|Vector grid|#Vector general tools|Delete duplicate geometries|Join attributes by location|Join attributes table|Merge vector layers|Polygon from layer extent|Reproject layer|Save selected features|Set style for vector layer|Snap points to grid|Split vector layer|#Vector geometry tools|Concave hull|Convert geometry type|Convex hull|Create points along lines|Delaunay triangulation|Densify geometries|Densify geometries given an interval|Dissolve|Eliminate sliver polygons|Explode lines|Extract nodes|Fill holes|Fixed distance buffer|Keep n biggest parts|Lines to polygons|Multipart to singleparts|Points displacement|Polygon centroids|Polygonize|Polygons to lines|Simplify geometries|Singleparts to multipart|Variable distance buffer|Voronoi polygons|#Vector overlay tools|Clip|Difference|Intersection|Line intersections|Split lines with lines|Symetrical difference|Union|#Vector selection tools|Extract by attribute|Extract by location'.split('|');
document.getElementById('algs').innerHTML=algs.map((a,i)=>a[0]==='#'
 ?`<div class="fold d-flex align-items-stretch"><span class="t1"></span><span class="t2"></span><span class="expd"></span><span class="stub align-self-center ms-1"></span><span>${a.slice(1)}</span></div>`
 :`<div class="alg d-flex align-items-stretch${a==='Polygon centroids'?' now':''}"><span class="t1"></span><span class="t2"></span><span class="t3${(algs[i+1]||'')[0]==='#'?' end':''}"></span><span class="d-flex align-items-center"><svg class="ms-1" width="12" height="15" viewBox="3 0 19 24" preserveAspectRatio="none">${I.qgis}</svg></span><span class="ms-2">${a}</span></div>`).join('');

/* Cost points: row, colour class and columns on a 7.333 px lattice */
const C={D:'#8b2c08',R:'#df5410',O:'#f98f45',P:'#fdcfa5',W:'#fff3ea'};
const P=`0 D40;1 D40;2 D39;3 D38,39;4 D37,39;5 D36,40;6 D28,29,30,31,32,33,34,35,36,40;7 D27,35;8 R25,26,30 D31,32,33,34;9 R25,29;10 R24,28;11 R24,27;12 D21,22 R24,27;13 R23,24,27 D25,26;14 R23,27,28;15 R23,27,28;16 R23,27;17 O23 R26;18 O23,25;19 O23,24;20 O23;21 O22,23;22 O20,21;23 O19,20,21;24 O19,21;25 O18,21;26 O17,21;27 D12,13,14 R15 O17 P20;28 O16,17,19 R18 P20;29 O15 R17 P21;30 O15 P21;31 P14,21 O15;32 P14,21;33 P14,21;34 P14,21;35 P15 W21;36 P16 W20;37 P17 W20;38 P17 W20;39 W17,18,19,20;40 W17,20;41 W17,21,22;42 W17,23;43 W17,23;44 W18,20,21,22,23,24;45 W18,19,23,24;46 W17,18,19,20,23;47 O8,9,10,11 P15 W16,20,23;48 P12,13,14 W21,22,23;49 O12 W23,24;50 O11,12;51 O10,11;59 R17 O18,19;60 R16 O19 P20,21 W23,24;61 R16 W22,23,24;62 D10,11,12,15 W24;63 D13,14;78 W31;79 W31;80 W32;81 W32;82 W32;83 W32;84 W32;85 W32,33;86 W33,34 P35,36,37,38,39;87 W34 P40;88 W35 P41,42;89 W35 P43;90 W35 P43;91 W36 P43;92 W36 P42;93 W36 P42;94 W36 P42;95 P37,42;96 P37,42;97 P37,42;98 P37,42;99 P38,41,42;100 P39,40,41,42;101 P40,41,42;102 P42,43,44;103 P45,46 D58;104 P46,47 D58;105 P47 D58;106 P46,47 R58;107 P46 O58;108 P46,47,55,56,57,58,59;109 P47,50,51,52,53,54,55,59,61,62,63;110 P48,49,50,51,60,64,65;111 O60,61,68,69,70 P66,67;112 R60 O71;113 D60 O72`;
document.getElementById('dots').innerHTML=P.split(';').map(l=>{const [r,...g]=l.split(' ');return g.map(q=>q.slice(1).split(',').map(c=>`<circle cx="${Math.round(844-22/3*(40-c))}" cy="${Math.round(162+22/3*r)}" r="2" fill="${C[q[0]]}"/>`).join('')).join('')}).join('');
</script>
<script src="https://cdn.jsdelivr.net/npm/bootstrap@5.3.0/dist/js/bootstrap.bundle.min.js"></script>
</body>
</html>
